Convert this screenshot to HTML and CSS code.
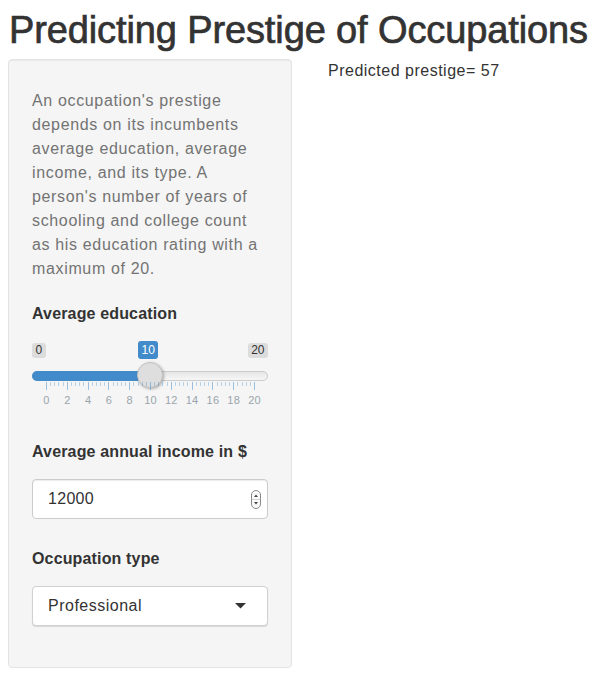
FILE: index.html
```html
<!DOCTYPE html>
<html>
<head>
<meta charset="utf-8">
<title>Predicting Prestige of Occupations</title>
<link rel="stylesheet" href="styles.css">
</head>
<body>
<h1 class="title">Predicting Prestige of Occupations</h1>
<div class="layout">
  <aside class="well">
    <p class="help">An occupation's prestige depends on its incumbents average education, average income, and its type. A person's number of years of schooling and college count as his education rating with a maximum of 20.</p>

    <div class="form-group">
      <label class="control-label">Average education</label>
      <div class="slider">
        <div class="slider-labels">
          <span class="irs-minmax">0</span>
          <span class="irs-single" style="left: 106px">10</span>
          <span class="irs-minmax">20</span>
        </div>
        <div class="track">
          <div class="bar" style="width: 118px"></div>
          <div class="handle" style="left: 105px"></div>
        </div>
        <div class="grid">
          <span class="pol major" style="left: 14px"></span>
          <span class="pol" style="left: 18.16px"></span>
          <span class="pol" style="left: 22.32px"></span>
          <span class="pol" style="left: 26.48px"></span>
          <span class="pol" style="left: 30.64px"></span>
          <span class="pol major" style="left: 34.8px"></span>
          <span class="pol" style="left: 38.96px"></span>
          <span class="pol" style="left: 43.12px"></span>
          <span class="pol" style="left: 47.28px"></span>
          <span class="pol" style="left: 51.44px"></span>
          <span class="pol major" style="left: 55.6px"></span>
          <span class="pol" style="left: 59.76px"></span>
          <span class="pol" style="left: 63.92px"></span>
          <span class="pol" style="left: 68.08px"></span>
          <span class="pol" style="left: 72.24px"></span>
          <span class="pol major" style="left: 76.4px"></span>
          <span class="pol" style="left: 80.56px"></span>
          <span class="pol" style="left: 84.72px"></span>
          <span class="pol" style="left: 88.88px"></span>
          <span class="pol" style="left: 93.04px"></span>
          <span class="pol major" style="left: 97.2px"></span>
          <span class="pol" style="left: 101.36px"></span>
          <span class="pol" style="left: 105.52px"></span>
          <span class="pol" style="left: 109.68px"></span>
          <span class="pol" style="left: 113.84px"></span>
          <span class="pol major" style="left: 118px"></span>
          <span class="pol" style="left: 122.16px"></span>
          <span class="pol" style="left: 126.32px"></span>
          <span class="pol" style="left: 130.48px"></span>
          <span class="pol" style="left: 134.64px"></span>
          <span class="pol major" style="left: 138.8px"></span>
          <span class="pol" style="left: 142.96px"></span>
          <span class="pol" style="left: 147.12px"></span>
          <span class="pol" style="left: 151.28px"></span>
          <span class="pol" style="left: 155.44px"></span>
          <span class="pol major" style="left: 159.6px"></span>
          <span class="pol" style="left: 163.76px"></span>
          <span class="pol" style="left: 167.92px"></span>
          <span class="pol" style="left: 172.08px"></span>
          <span class="pol" style="left: 176.24px"></span>
          <span class="pol major" style="left: 180.4px"></span>
          <span class="pol" style="left: 184.56px"></span>
          <span class="pol" style="left: 188.72px"></span>
          <span class="pol" style="left: 192.88px"></span>
          <span class="pol" style="left: 197.04px"></span>
          <span class="pol major" style="left: 201.2px"></span>
          <span class="pol" style="left: 205.36px"></span>
          <span class="pol" style="left: 209.52px"></span>
          <span class="pol" style="left: 213.68px"></span>
          <span class="pol" style="left: 217.84px"></span>
          <span class="pol major" style="left: 222px"></span>

          <span class="grid-text" style="left: 14px">0</span>
          <span class="grid-text" style="left: 34.8px">2</span>
          <span class="grid-text" style="left: 55.6px">4</span>
          <span class="grid-text" style="left: 76.4px">6</span>
          <span class="grid-text" style="left: 97.2px">8</span>
          <span class="grid-text" style="left: 118px">10</span>
          <span class="grid-text" style="left: 138.8px">12</span>
          <span class="grid-text" style="left: 159.6px">14</span>
          <span class="grid-text" style="left: 180.4px">16</span>
          <span class="grid-text" style="left: 201.2px">18</span>
          <span class="grid-text" style="left: 222px">20</span>
        </div>
      </div>
    </div>

    <div class="form-group">
      <label class="control-label">Average annual income in $</label>
      <div class="input-box">
        <span class="input-value">12000</span>
        <svg class="spinner" width="10" height="19" viewBox="0 0 10 19" aria-hidden="true">
          <rect x="0.5" y="0.5" width="9" height="18" rx="4.5" ry="4.5" fill="#fafafa" stroke="#8a8a8a" stroke-width="1"/>
          <line x1="1" y1="9.5" x2="9" y2="9.5" stroke="#d0d0d0" stroke-width="1"/>
          <path d="M3 7 L5 4.5 L7 7 Z" fill="#444"/>
          <path d="M3 12 L5 14.5 L7 12 Z" fill="#444"/>
        </svg>
      </div>
    </div>

    <div class="form-group">
      <label class="control-label">Occupation type</label>
      <div class="select-box">
        <span class="select-value">Professional</span>
        <svg class="caret" width="11" height="6" viewBox="0 0 11 6" aria-hidden="true">
          <path d="M0 0 L11 0 L5.5 5.5 Z" fill="#333"/>
        </svg>
      </div>
    </div>
  </aside>

  <main class="main">
    <div class="prediction">Predicted prestige= 57</div>
  </main>
</div>
</body>
</html>
```

FILE: styles.css
```css
* {
  box-sizing: border-box;
}

body {
  margin: 8px;
  font-family: "Liberation Sans", Arial, sans-serif;
  font-size: 16px;
  line-height: 24px;
  color: #333;
  background: #fff;
}

.title {
  margin: 0 0 7px 0;
  font-size: 38px;
  line-height: 44px;
  font-weight: 500;
  color: #333;
  letter-spacing: -0.12px;
  -webkit-text-stroke: 0.7px #333;
  padding-left: 1px;
}

.layout {
  display: grid;
  grid-template-columns: 284px 1fr;
  column-gap: 36px;
  align-items: start;
}

.well {
  background: #f5f5f5;
  border: 1px solid #e3e3e3;
  border-radius: 4px;
  box-shadow: inset 0 1px 1px rgba(0, 0, 0, 0.05);
  padding: 23px;
}

.help {
  margin: 6px 0 21px 0;
  color: #737373;
  letter-spacing: 0.65px;
}

.form-group {
  margin-bottom: 28px;
}

.form-group:last-child {
  margin-bottom: 18px;
}

.control-label {
  display: block;
  font-weight: bold;
  margin-bottom: 15px;
  color: #333;
  letter-spacing: 0.15px;
}

/* slider */
.slider {
  display: flex;
  flex-direction: column;
}

.slider-labels {
  position: relative;
  display: flex;
  justify-content: space-between;
  align-items: flex-start;
  height: 18px;
  padding-top: 2px;
}

.irs-minmax {
  display: block;
  font-size: 12px;
  line-height: 15px;
  padding: 0 3.5px;
  background: rgba(0, 0, 0, 0.1);
  border-radius: 3px;
  color: #333;
}

.irs-single {
  position: absolute;
  top: 0;
  font-size: 12px;
  line-height: 18px;
  padding: 0 3.5px;
  background: #428bca;
  border-radius: 3px;
  color: #fff;
}

.track {
  position: relative;
  margin-top: 12px;
  height: 10px;
  border: 1px solid #cccccc;
  border-radius: 6px;
  background: linear-gradient(to bottom, #dddddd -50%, #ffffff 150%);
}

.bar {
  position: absolute;
  left: -1px;
  top: -1px;
  height: 10px;
  background: #428bca;
  border-radius: 6px 0 0 6px;
}

.handle {
  position: absolute;
  top: -10px;
  width: 26px;
  height: 26px;
  border-radius: 50%;
  background: #dedede;
  border: 1px solid #c4c4c4;
  box-shadow: 1px 1px 3px rgba(0, 0, 0, 0.3);
  margin-left: -1px;
}

.grid {
  position: relative;
  height: 31px;
}

.pol {
  position: absolute;
  top: 1px;
  width: 1px;
  height: 4px;
  background: #428bca;
  opacity: 0.35;
}

.pol.major {
  height: 8px;
  opacity: 0.5;
}

.grid-text {
  position: absolute;
  top: 13px;
  transform: translateX(-50%);
  font-size: 11px;
  line-height: 13px;
  color: #99a4ac;
  white-space: nowrap;
  margin-left: 0.5px;
  letter-spacing: 0.2px;
}

/* numeric input */
.input-box {
  display: flex;
  align-items: center;
  justify-content: space-between;
  height: 40px;
  padding: 0 6px 0 15px;
  background: #fff;
  border: 1px solid #cccccc;
  border-radius: 4px;
  box-shadow: inset 0 1px 1px rgba(0, 0, 0, 0.075);
}

.input-value {
  color: #333;
  letter-spacing: 0.3px;
}

.spinner {
  display: block;
}

/* select */
.select-box {
  display: flex;
  align-items: center;
  justify-content: space-between;
  height: 40px;
  padding: 0 21px 0 15px;
  background: #fff;
  border: 1px solid #d0d0d0;
  border-radius: 4px;
  box-shadow: 0 1px 1px rgba(0, 0, 0, 0.12);
}

.select-value {
  color: #333;
  letter-spacing: 0.5px;
}

.caret {
  display: block;
  margin-top: -1px;
}

.prediction {
  color: #333;
  letter-spacing: 0.5px;
}
```
